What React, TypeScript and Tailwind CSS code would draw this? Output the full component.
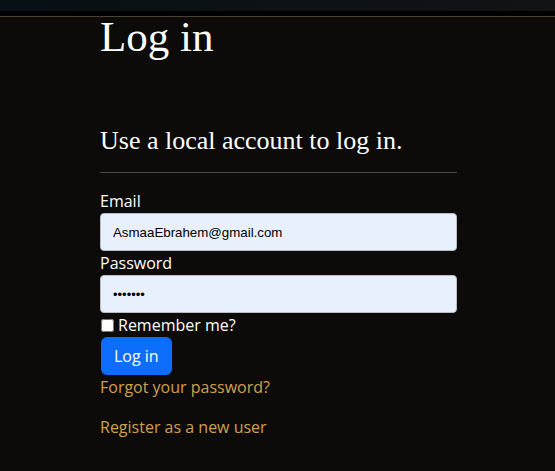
import React from "react";

const App = () => {
  return (
    <div className="min-h-[471px] w-full bg-[#0c0b09] font-['Open_Sans',sans-serif] text-white">
      {/* top nav remnant */}
      <div className="h-[11px] bg-gradient-to-r from-[#071015] to-[#111314]" />
      <div className="h-[5px] bg-black" />
      <div className="h-px bg-[#4b4333]" />

      <main className="pl-[100px] w-[457px]">
        <h1 className="font-['Liberation_Serif',serif] text-[43px] leading-[40px]">
          Log in
        </h1>

        <section className="mt-[69px]">
          <h2 className="font-['Liberation_Serif',serif] text-[26px] leading-[30px]">
            Use a local account to log in.
          </h2>
          <hr className="mt-[16px] border-t border-[#4a4a4a]" />

          <form className="mt-[17px]" onSubmit={(e) => e.preventDefault()}>
            <label className="block text-[16px] leading-[22px]">Email</label>
            <input
              type="email"
              defaultValue="AsmaaEbrahem@gmail.com"
              className="mt-[1px] block h-[38px] w-[357px] rounded-[4px] border border-[#b9bcc2] bg-[#e8f0fe] px-[12px] font-['Liberation_Sans',sans-serif] text-[13.3px] text-black outline-none"
            />

            <label className="mt-[1px] block text-[16px] leading-[22px]">Password</label>
            <input
              type="password"
              defaultValue="1234567"
              className="mt-[1px] block h-[38px] w-[357px] rounded-[4px] border border-[#b9bcc2] bg-[#e8f0fe] px-[12px] font-['Liberation_Sans',sans-serif] text-[13px] text-black outline-none"
            />

            <div className="mt-[1px] flex items-center gap-[4px] text-[16px] leading-[22px]">
              <input type="checkbox" className="h-[13px] w-[13px] ml-[1px]" />
              <span>Remember me?</span>
            </div>

            <button
              type="submit"
              className="mt-[1px] ml-[1px] h-[38px] rounded-[6px] bg-[#0d6efd] px-[13px] text-[16px] text-white"
            >
              Log in
            </button>
          </form>

          <div className="text-[16px] leading-[24px] text-[#d0a04f]">
            <p>
              <a href="#">Forgot your password?</a>
            </p>
            <p className="mt-[16px]">
              <a href="#">Register as a new user</a>
            </p>
          </div>
        </section>
      </main>
    </div>
  );
};

export default App;
